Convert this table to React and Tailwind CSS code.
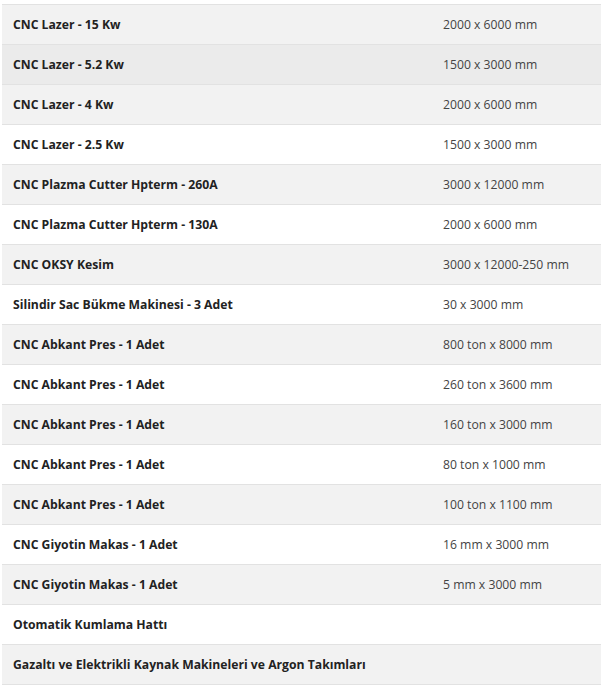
import React from 'react';

const rows = [
  ['CNC Lazer - 15 Kw', '2000 x 6000 mm'],
  ['CNC Lazer - 5.2 Kw', '1500 x 3000 mm'],
  ['CNC Lazer - 4 Kw', '2000 x 6000 mm'],
  ['CNC Lazer - 2.5 Kw', '1500 x 3000 mm'],
  ['CNC Plazma Cutter Hpterm - 260A', '3000 x 12000 mm'],
  ['CNC Plazma Cutter Hpterm - 130A', '2000 x 6000 mm'],
  ['CNC OKSY Kesim', '3000 x 12000-250 mm'],
  ['Silindir Sac Bükme Makinesi - 3 Adet', '30 x 3000 mm'],
  ['CNC Abkant Pres - 1 Adet', '800 ton x 8000 mm'],
  ['CNC Abkant Pres - 1 Adet', '260 ton x 3600 mm'],
  ['CNC Abkant Pres - 1 Adet', '160 ton x 3000 mm'],
  ['CNC Abkant Pres - 1 Adet', '80 ton x 1000 mm'],
  ['CNC Abkant Pres - 1 Adet', '100 ton x 1100 mm'],
  ['CNC Giyotin Makas - 1 Adet', '16 mm x 3000 mm'],
  ['CNC Giyotin Makas - 1 Adet', '5 mm x 3000 mm'],
  ['Otomatik Kumlama Hattı', ''],
  ['Gazaltı ve Elektrikli Kaynak Makineleri ve Argon Takımları', ''],
];

export default function App() {
  return (
    <div className="bg-white pt-[4px] pl-[2px] pr-[3px]" style={{ fontFamily: '"Open Sans", sans-serif' }}>
      <table className="w-full border-collapse text-[12.2px]">
        <tbody>
          {rows.map(([name, size], i) => (
            <tr
              key={i}
              className={
                'h-[40px] border-t border-b border-[#e2e2e2] ' +
                (i === 1 ? 'bg-[#ebebeb]' : i % 2 === 0 ? 'bg-[#f2f2f2]' : 'bg-white')
              }
            >
              <td
                className={'pl-[11px] pt-[1px] font-bold text-[#222] whitespace-nowrap ' + (size ? 'w-[430px]' : '')}
                colSpan={size ? 1 : 2}
              >
                {name}
              </td>
              {size && <td className="pl-[11px] pt-[1px] text-[#444]">{size}</td>}
            </tr>
          ))}
        </tbody>
      </table>
    </div>
  );
}
